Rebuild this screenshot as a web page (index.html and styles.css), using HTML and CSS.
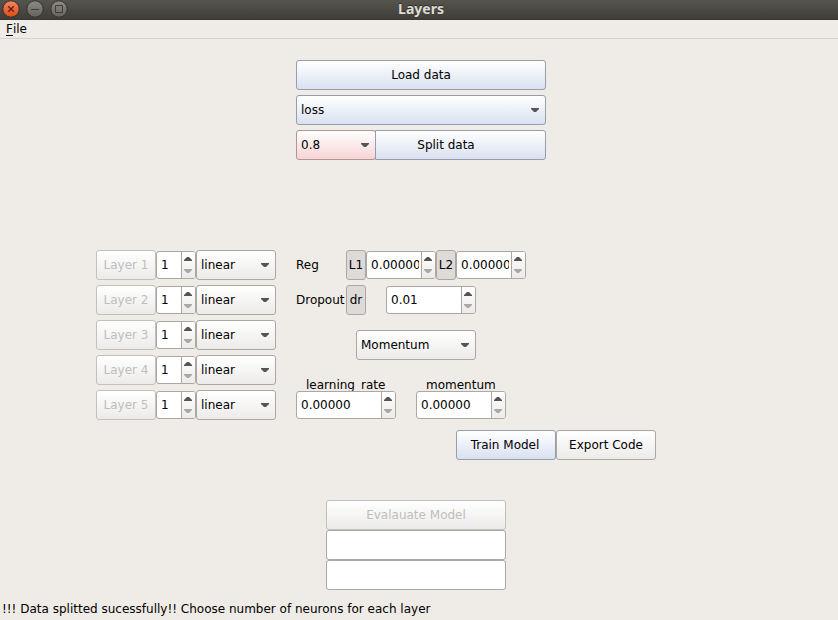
FILE: index.html
```
<!DOCTYPE html>
<html lang="en">
<head>
<meta charset="utf-8">
<title>Layers</title>
<link rel="stylesheet" href="styles.css">
</head>
<body>
<div class="window">
  <header class="titlebar">
    <div class="controls">
      <svg class="control" viewBox="0 0 18 18">
        <defs>
          <linearGradient id="orange" x1="0" y1="0" x2="0" y2="1"><stop offset="0" stop-color="#f58763"/><stop offset="1" stop-color="#df4b16"/></linearGradient>
          <linearGradient id="grey" x1="0" y1="0" x2="0" y2="1"><stop offset="0" stop-color="#8d8b84"/><stop offset="1" stop-color="#65635c"/></linearGradient>
        </defs>
        <circle cx="9" cy="9" r="8.2" fill="url(#orange)" stroke="#35332e"/>
        <path d="M6.2 6.2l5.6 5.6M11.8 6.2l-5.6 5.6" stroke="#5a2410" stroke-width="1.4"/>
      </svg>
      <svg class="control" viewBox="0 0 18 18">
        <circle cx="9" cy="9" r="8.2" fill="url(#grey)" stroke="#35332e"/>
        <path d="M5 9.5h8" stroke="#3c3b37"/>
      </svg>
      <svg class="control" viewBox="0 0 18 18">
        <circle cx="9" cy="9" r="8.2" fill="url(#grey)" stroke="#35332e"/>
        <path d="M5.5 5.5h7v7h-7z" fill="none" stroke="#3c3b37"/>
      </svg>
    </div>
    <div class="title">Layers</div>
  </header>
  <nav class="menubar"><span class="mnemonic">F</span>ile</nav>

  <main>
    <section class="data">
      <div class="button blue">Load data</div>
      <div class="combo blue">loss</div>
      <div class="row">
        <div class="combo red w80">0.8</div>
        <div class="button blue split">Split data</div>
      </div>
    </section>

    <section class="model">
      <div class="layers">
        <div class="row"><div class="button disabled w60">Layer 1</div><div class="spin w40"><span class="value">1</span><span class="steps"></span></div><div class="combo w80">linear</div></div>
        <div class="row"><div class="button disabled w60">Layer 2</div><div class="spin w40"><span class="value">1</span><span class="steps"></span></div><div class="combo w80">linear</div></div>
        <div class="row"><div class="button disabled w60">Layer 3</div><div class="spin w40"><span class="value">1</span><span class="steps"></span></div><div class="combo w80">linear</div></div>
        <div class="row"><div class="button disabled w60">Layer 4</div><div class="spin w40"><span class="value">1</span><span class="steps"></span></div><div class="combo w80">linear</div></div>
        <div class="row"><div class="button disabled w60">Layer 5</div><div class="spin w40"><span class="value">1</span><span class="steps"></span></div><div class="combo w80">linear</div></div>
      </div>
      <div class="options">
        <div class="row">
          <span class="label">Reg</span>
          <div class="button checked">L1</div>
          <div class="spin w70"><span class="value">0.00000</span><span class="steps"></span></div>
          <div class="button checked">L2</div>
          <div class="spin w70"><span class="value">0.00000</span><span class="steps"></span></div>
        </div>
        <div class="row dropout">
          <span class="label">Dropout</span>
          <div class="button checked">dr</div>
          <div class="spin w90 rate"><span class="value">0.01</span><span class="steps"></span></div>
        </div>
        <div class="combo w120 optimizer">Momentum</div>
        <div class="row params">
          <div class="param w100"><div class="caption">learning_rate</div><div class="spin"><span class="value">0.00000</span><span class="steps"></span></div></div>
          <div class="param w90"><div class="caption">momentum</div><div class="spin"><span class="value">0.00000</span><span class="steps"></span></div></div>
        </div>
      </div>
    </section>

    <section class="row actions">
      <div class="button blue w100 train">Train Model</div>
      <div class="button w100">Export Code</div>
    </section>

    <section class="evaluate">
      <div class="button disabled">Evalauate Model</div>
      <div class="field"></div>
      <div class="field"></div>
    </section>
  </main>
  <footer class="status">!!! Data splitted sucessfully!! Choose number of neurons for each layer</footer>
</div>
</body>
</html>
```

FILE: styles.css
```
* { box-sizing: border-box; }
body {
  margin: 0;
  background: #efebe7;
  color: #000;
  font: 12px/14px "DejaVu Sans", sans-serif;
}
.window { width: 838px; height: 620px; overflow: hidden; display: flex; flex-direction: column; }

.titlebar {
  flex: none;
  height: 20px;
  display: grid;
  grid-template-columns: 1fr auto 1fr;
  background: linear-gradient(#56554d, #3e3d38);
  border-bottom: 1px solid #393834;
}
.controls { display: flex; gap: 6px; padding-left: 2px; }
.control { width: 18px; height: 18px; }
.title {
  color: #dfdbd2;
  font: bold 14px/18px "Noto Sans", sans-serif;
  padding-left: 4px;
  text-shadow: 0 -1px #2b2a27;
}
.menubar { flex: none; height: 19px; padding: 2px 6px; border-bottom: 1px solid #d5d1cd; }
.mnemonic { display: inline-block; height: 14px; border-bottom: 1px solid #000; }

main { flex: none; height: 561px; padding-top: 21px; }
.row { display: flex; align-items: center; }

.button, .combo {
  height: 30px;
  flex: none;
  display: flex;
  align-items: center;
  border: 1px solid #aba7a3;
  border-radius: 3px;
  background: linear-gradient(#fff, #edebe9);
  white-space: nowrap;
  padding-bottom: 1px;
}
.button { justify-content: center; }
.combo { justify-content: space-between; padding-left: 4px; padding-right: 6px; }
.combo::after {
  content: "";
  width: 8px;
  height: 4px;
  margin-top: 1px;
  background: #555;
  clip-path: polygon(0 0, 100% 0, 100% 25%, 62.5% 100%, 37.5% 100%, 0 25%);
}
.blue { border-color: #959daf; background: linear-gradient(#fff, #d9e1f0); }
.red { border-color: #b39492; background: linear-gradient(#fff, #f7d4d4); }
.disabled { color: #bebebe; border-color: #c4c0bc; }
.checked { width: 20px; background: #dedad7; }

.spin {
  height: 28px;
  flex: none;
  display: flex;
  border: 1px solid #aba7a3;
  border-radius: 3px;
  background: #fff;
  overflow: hidden;
}
.value { flex: 1; min-width: 0; margin: 0 2px 0 4px; line-height: 26px; overflow: hidden; }
.steps {
  flex: none;
  width: 14px;
  border-left: 1px solid #aba7a3;
  background: linear-gradient(#fff, #edebe9);
  display: flex;
  flex-direction: column;
  gap: 8px;
  padding: 5px 0 0 2px;
}
.steps::before, .steps::after { content: ""; width: 8px; height: 4px; }
.steps::before { background: #555; clip-path: polygon(0 100%, 100% 100%, 100% 75%, 62.5% 0, 37.5% 0, 0 75%); }
.steps::after { background: #aaa8a6; clip-path: polygon(0 0, 100% 0, 100% 25%, 62.5% 100%, 37.5% 100%, 0 25%); }

.w40 { width: 40px; }
.w60 { width: 60px; }
.w70 { width: 70px; }
.w80 { width: 80px; }
.w90 { width: 90px; }
.w100 { width: 100px; }
.w120 { width: 120px; }

.data { width: 250px; margin-left: 296px; display: flex; flex-direction: column; gap: 5px; }
.split { flex: 1; margin-left: -1px; padding-right: 29px; border-radius: 0 3px 3px 0; }

.model { display: flex; gap: 20px; margin: 90px 0 0 96px; }
.layers { display: flex; flex-direction: column; gap: 5px; }
.label { width: 50px; padding-bottom: 1px; white-space: nowrap; }
.dropout { margin-top: 5px; }
.rate { margin-left: 20px; }
.optimizer { margin: 15px 0 0 60px; }
.params { gap: 20px; margin-top: 18px; }
.caption { height: 13px; overflow: hidden; padding-left: 10px; }

.actions { margin: 10px 0 0 456px; }
.train { padding-right: 2px; }
.evaluate { width: 180px; margin: 40px 0 0 326px; }
.field { height: 30px; border: 1px solid #aba7a3; border-radius: 3px; background: #fff; }

.status { padding: 2px; }
```
